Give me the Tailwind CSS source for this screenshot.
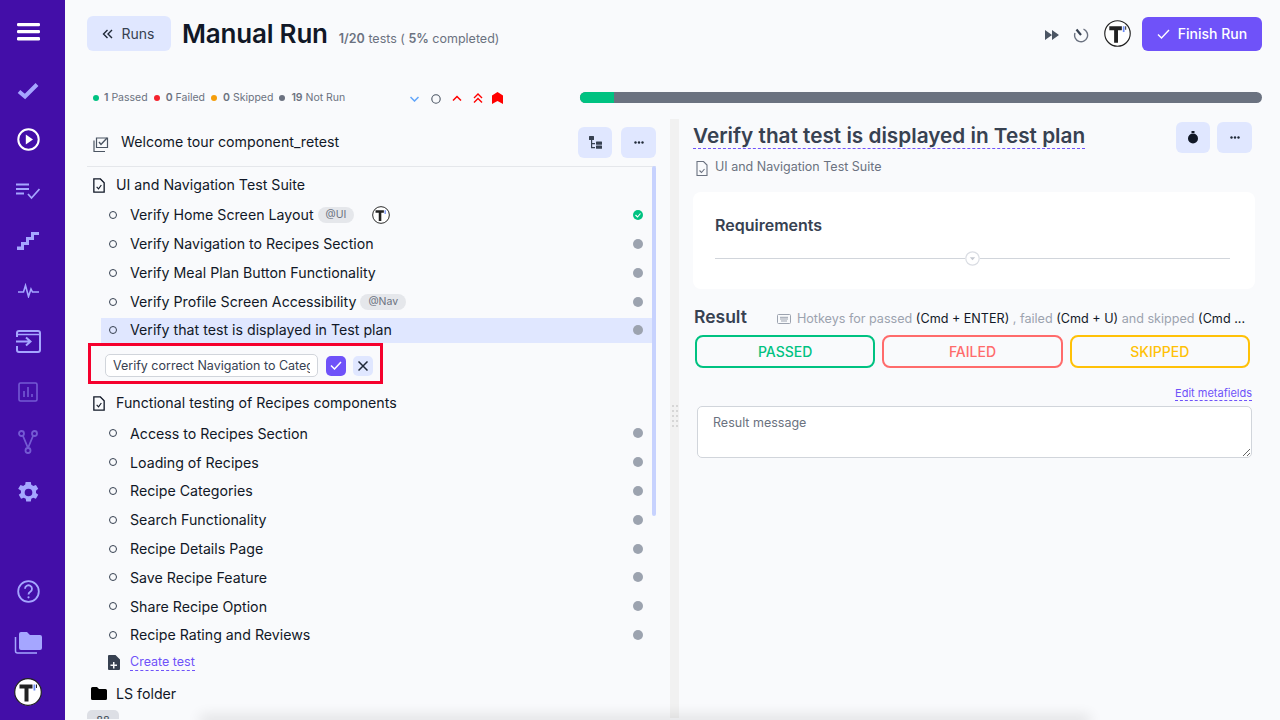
<!DOCTYPE html>
<html lang="en">
<head>
<meta charset="UTF-8">
<title>Manual Run</title>
<script src="https://cdn.jsdelivr.net/npm/@tailwindcss/browser@4"></script>
</head>
<body class="w-[1280px] h-[720px] overflow-hidden flex bg-[#f9fafc] font-['Inter',sans-serif] text-[#111827]">

<!-- Sidebar -->
<nav class="w-[65px] h-[720px] shrink-0 pr-[9px] bg-[#430ea8] flex flex-col items-center text-[#a5a6ff]">
  <svg class="mt-[23px] w-[23px] h-[18px] text-white" viewBox="0 0 23 18" fill="currentColor"><rect x="0" y="0" width="23" height="3.2" rx="1.2"/><rect x="0" y="7" width="23" height="3.2" rx="1.2"/><rect x="0" y="14" width="23" height="3.4" rx="1.2"/></svg>
  <svg class="mt-[41px] w-[22px] h-[18px]" viewBox="0 0 22 18" fill="none" stroke="currentColor" stroke-width="4"><path d="M2 9.5l6 5L20 2.5"/></svg>
  <svg class="mt-[28px] w-[23px] h-[23px] text-white" viewBox="0 0 23 23" fill="none" stroke="currentColor" stroke-width="2"><circle cx="11.5" cy="11.5" r="10.2"/><path d="M8.8 6.5l7.2 5-7.2 5z" fill="currentColor" stroke="none"/></svg>
  <svg class="mt-[32px] w-[24px] h-[17px]" viewBox="0 0 24 17" fill="none" stroke="currentColor" stroke-width="1.8"><path d="M0 1.5h13M0 6h13M0 10.5h8M12 11l3.5 4L23.5 6"/></svg>
  <svg class="mt-[32px] w-[22px] h-[18px]" viewBox="0 0 22 18" fill="currentColor"><path d="M14 0h8v3h-5v5h-5v5H7v5H0v-3.5h4V10h5V5h5z"/></svg>
  <svg class="mt-[33px] w-[21px] h-[15px]" viewBox="0 0 21 15" fill="none" stroke="currentColor" stroke-width="1.6"><path d="M0 9h5.5l2-6.5 3 11 2.500-7.500 1.500 3H21"/></svg>
  <svg class="mt-[32px] w-[25px] h-[23px]" viewBox="0 0 25 23" fill="none" stroke="currentColor" stroke-width="2"><path d="M1 7V3q0-2 2-2h19q2 0 2 2v17q0 2-2 2H3q-2 0-2-2v-4"/><path d="M1 4.500h23" stroke-width="1.500"/><path d="M0 11.500h14M10 7.500l4.500 4-4.500 4"/></svg>
  <svg class="mt-[29px] w-[20px] h-[20px] opacity-50" viewBox="0 0 20 20" fill="none" stroke="currentColor" stroke-width="1.600"><rect x="1" y="1" width="18" height="18" rx="1.500"/><path d="M6 15V9M10 15V5M14 15v-3"/></svg>
  <svg class="mt-[28px] w-[20px] h-[24px] opacity-50" viewBox="0 0 20 24" fill="none" stroke="currentColor" stroke-width="1.800"><circle cx="3.500" cy="3.500" r="2.500"/><circle cx="16.500" cy="3.500" r="2.500"/><circle cx="10" cy="20.500" r="2.500"/><path d="M5 6l5 12M15 6l-5 12"/></svg>
  <svg class="mt-[27px] w-[23px] h-[23px]" viewBox="0 0 24 24" fill="currentColor"><path fill-rule="evenodd" d="M14.400 1l.5 3a8.500 8.500 0 0 1 2 1.150l2.850-1.100 2.400 4.150-2.350 1.900a8.500 8.500 0 0 1 0 2.300l2.350 1.900-2.400 4.150-2.850-1.100a8.500 8.500 0 0 1-2 1.150l-.5 3h-4.800l-.5-3a8.500 8.500 0 0 1-2-1.150l-2.850 1.100-2.400-4.150 2.350-1.900a8.500 8.500 0 0 1 0-2.300L1.250 8.200l2.400-4.150 2.850 1.100a8.500 8.500 0 0 1 2-1.150l.5-3zM12 8a4 4 0 1 0 0 8 4 4 0 0 0 0-8z"/></svg>
  <svg class="mt-[76px] w-[23px] h-[23px]" viewBox="0 0 23 23" fill="none" stroke="currentColor" stroke-width="1.800"><circle cx="11.500" cy="11.500" r="10.300"/><path d="M8 8.800a3.500 3.500 0 1 1 5.300 3c-1.300.8-1.800 1.400-1.800 2.700"/><circle cx="11.500" cy="17.300" r="1.100" fill="currentColor" stroke="none"/></svg>
  <svg class="mt-[28px] w-[28px] h-[24px]" viewBox="0 0 28 24" fill="currentColor"><path d="M5 3q0-2 2-2h6l3 3h10q2 0 2 2v11q0 2-2 2H7q-2 0-2-2z"/><path d="M1.500 6v14q0 2 2 2H23" fill="none" stroke="currentColor" stroke-width="1.500"/></svg>
  <svg class="mt-[23px] w-[28px] h-[28px]" viewBox="0 0 28 28"><circle cx="14" cy="14" r="13.300" fill="#fff" stroke="#222" stroke-width="1.200"/><path d="M5.500 6.500h13v4h-4v13h-4v-13h-5z" fill="#222"/><path d="M19.500 6.500h1.800v6h-1.800z" fill="#6d8cf5"/><path d="M22 6.500h1v3.500h-1z" fill="#222"/></svg>
</nav>

<main class="relative flex-1 min-w-0 h-[720px] pl-[22px] pr-[18px] overflow-hidden">
  <!-- Top bar -->
  <header class="h-[35px] mt-[16px] flex items-center">
    <button class="w-[84px] h-[35px] pr-[2px] rounded-[6px] bg-[#e0e7ff] flex items-center justify-center gap-[9px] text-[14px] text-[#374151]">
      <svg class="w-[11px] h-[10px]" viewBox="0 0 11 10" fill="none" stroke="#1f2937" stroke-width="1.400"><path d="M5.500 1L1.500 5l4 4M10 1L6 5l4 4"/></svg>
      Runs
    </button>
    <h1 class="ml-[11px] text-[26px] font-semibold leading-[35px] text-[#111827] tracking-[-0.2px]">Manual Run</h1>
    <p class="ml-[11px] mt-[12px] text-[12.500px] text-[#6b7280]"><b class="font-semibold">1/20</b> tests ( <b class="font-semibold">5%</b> completed)</p>
    <div class="ml-auto flex items-center">
      <svg class="mt-[2px] w-[14px] h-[10px]" viewBox="0 0 14 10" fill="#4b5563"><path d="M0 0l7 5-7 5zM7 0l7 5-7 5z"/></svg>
      <svg class="ml-[14px] mt-[2px] w-[16px] h-[16px]" viewBox="0 0 16 16" fill="none" stroke="#6b7280" stroke-width="1.400"><path d="M10.500 2.200A6.500 6.500 0 1 1 2 6"/><path d="M3.500 2.500L8 8" stroke="#374151" stroke-width="2.200"/></svg>
      <svg class="ml-[15px] w-[27px] h-[27px]" viewBox="0 0 28 28"><circle cx="14" cy="14" r="13.200" fill="#fff" stroke="#222" stroke-width="1.200"/><path d="M5.500 6.500h13v4h-4v13h-4v-13h-5z" fill="#222"/><path d="M19.500 6.500h1.800v6h-1.800z" fill="#6d8cf5"/><path d="M22 6.500h1v3.500h-1z" fill="#222"/></svg>
      <button class="ml-[11px] w-[120px] h-[34px] rounded-[6px] bg-[#6f52f9] text-white text-[14px] font-medium flex items-center justify-center gap-[8px]">
        <svg class="w-[13px] h-[10px]" viewBox="0 0 13 10" fill="none" stroke="#fff" stroke-width="1.400"><path d="M1 5.500l3.500 3.500L12 1"/></svg>
        Finish Run
      </button>
    </div>
  </header>

  <!-- Stats row -->
  <div class="mt-[41px] h-[11px] flex items-center text-[10.500px] text-[#6b7280]">
    <span class="ml-[6px] w-[6px] h-[6px] rounded-full bg-[#00c281]"></span>
    <span class="ml-[5px]"><b class="font-semibold">1</b> Passed</span>
    <span class="ml-[6px] w-[6px] h-[6px] rounded-full bg-[#f5222d]"></span>
    <span class="ml-[6px]"><b class="font-semibold">0</b> Failed</span>
    <span class="ml-[6px] w-[6px] h-[6px] rounded-full bg-[#f59e0b]"></span>
    <span class="ml-[6px]"><b class="font-semibold">0</b> Skipped</span>
    <span class="ml-[6px] w-[6px] h-[6px] rounded-full bg-[#6b7280]"></span>
    <span class="ml-[6px]"><b class="font-semibold">19</b> Not Run</span>
    <svg class="ml-[65px] mt-[2px] w-[9px] h-[6px]" viewBox="0 0 9 6" fill="none" stroke="#60a5fa" stroke-width="1.500"><path d="M.5 1l4 4 4-4"/></svg>
    <svg class="ml-[12px] mt-[2px] w-[10px] h-[10px]" viewBox="0 0 10 10" fill="none" stroke="#4b5563" stroke-width="1.100"><circle cx="5" cy="5" r="4.200"/></svg>
    <svg class="ml-[11px] mt-[1px] w-[10px] h-[6px]" viewBox="0 0 10 6" fill="none" stroke="#f00" stroke-width="1.500"><path d="M1 5.500l4-4 4 4"/></svg>
    <svg class="ml-[11px] mt-[1px] w-[10px] h-[10px]" viewBox="0 0 10 10" fill="none" stroke="#f00" stroke-width="1.400"><path d="M1 5l4-4 4 4M1 9.500l4-4 4 4"/></svg>
    <svg class="ml-[9px] mt-[1px] w-[11px] h-[12px]" viewBox="0 0 11 12" fill="#f00"><path d="M0 3.500L5.500 0 11 3.500V12L5.500 9 0 12z"/></svg>
    <div class="ml-auto w-[682px] h-[11px] rounded-full bg-[#6b7280] overflow-hidden"><div class="w-[34px] h-full bg-[#00c281]"></div></div>
  </div>

  <!-- Panes -->
  <div class="mt-[16px] flex h-[600px]">
    <!-- Left pane -->
    <section class="relative w-[569px] shrink-0 overflow-hidden">
      <div class="pt-[8px] h-[48px] flex items-start border-b border-[#e5e7eb] w-[569px]">
        <svg class="ml-[6px] mt-[9px] w-[16px] h-[16px]" viewBox="0 0 16 16" fill="none" stroke="#4b5563" stroke-width="1.200"><path d="M3.500 11.500V2h11v9.500z"/><path d="M1 4.500v11h11" /><path d="M6 6l2 2.500L14 2" stroke-width="1.400"/></svg>
        <span class="ml-[12px] mt-[6px] text-[14.200px] leading-[18px] text-[#111827]">Welcome tour component_retest</span>
        <button class="ml-auto w-[34px] h-[31px] rounded-[6px] bg-[#e0e7ff] flex items-center justify-center">
          <svg class="w-[13px] h-[13px]" viewBox="0 0 13 13" fill="#374151"><rect x="0" y="0" width="5" height="4" rx=".5"/><path d="M2 4h1.200v7H6v1.200H2zM3 7h3v1.200H3z"/><rect x="7" y="5.500" width="6" height="3.200" rx=".5"/><rect x="7" y="9.500" width="6" height="3.200" rx=".5"/></svg>
        </button>
        <button class="ml-[9px] w-[35px] h-[31px] rounded-[6px] bg-[#e0e7ff] flex items-center justify-center">
          <svg class="w-[10px] h-[3px]" viewBox="0 0 10 3" fill="#1f2937"><circle cx="1.500" cy="1.500" r="1.200"/><circle cx="5" cy="1.500" r="1.200"/><circle cx="8.500" cy="1.500" r="1.200"/></svg>
        </button>
      </div>

      <div class="w-[566px] text-[14.200px] text-[#111827]">
        <div class="h-[33px] flex items-center pl-[5px] pt-[3px]">
          <svg class="w-[14px] h-[15px]" viewBox="0 0 14 16" fill="none" stroke="#111827" stroke-width="1.400"><path d="M1.500 1h7l4 4v10h-11z"/><path d="M4.500 9.500l2 2 3-4" stroke-width="1.200"/></svg>
          <span class="ml-[10px]">UI and Navigation Test Suite</span>
        </div>
        <div class="h-[29px] flex items-center pl-[22px] pr-[10px]">
          <span class="w-[8px] h-[8px] rounded-full border border-[#374151]"></span>
          <span class="ml-[13px]">Verify Home Screen Layout</span>
          <span class="ml-[4px] h-[16px] px-[8px] rounded-full bg-[#e5e7eb] text-[10.500px] leading-[16px] text-[#6b7280]">@UI</span>
          <svg class="ml-[18px] w-[18px] h-[18px]" viewBox="0 0 28 28"><circle cx="14" cy="14" r="13" fill="#fff" stroke="#222" stroke-width="1.500"/><path d="M5.500 6.500h13v4h-4v13h-4v-13h-5z" fill="#222"/><path d="M19.500 6.500h2v6h-2z" fill="#6d8cf5"/></svg>
          <svg class="ml-auto w-[10px] h-[10px]" viewBox="0 0 10 10"><circle cx="5" cy="5" r="5" fill="#00c281"/><path d="M2.500 5l2 2 3-3.500" fill="none" stroke="#fff" stroke-width="1.100"/></svg>
        </div>
        <div class="h-[29px] flex items-center pl-[22px] pr-[10px]">
          <span class="w-[8px] h-[8px] rounded-full border border-[#374151]"></span>
          <span class="ml-[13px]">Verify Navigation to Recipes Section</span>
          <span class="ml-auto w-[10px] h-[10px] rounded-full bg-[#9ca3af]"></span>
        </div>
        <div class="h-[29px] flex items-center pl-[22px] pr-[10px]">
          <span class="w-[8px] h-[8px] rounded-full border border-[#374151]"></span>
          <span class="ml-[13px]">Verify Meal Plan Button Functionality</span>
          <span class="ml-auto w-[10px] h-[10px] rounded-full bg-[#9ca3af]"></span>
        </div>
        <div class="h-[29px] flex items-center pl-[22px] pr-[10px]">
          <span class="w-[8px] h-[8px] rounded-full border border-[#374151]"></span>
          <span class="ml-[13px]">Verify Profile Screen Accessibility</span>
          <span class="ml-[4px] h-[16px] px-[8px] rounded-full bg-[#e5e7eb] text-[10.500px] leading-[16px] text-[#6b7280]">@Nav</span>
          <span class="ml-auto w-[10px] h-[10px] rounded-full bg-[#9ca3af]"></span>
        </div>
        <div class="ml-[14px] h-[25px] mt-[2px] pb-[1px] flex items-center pl-[8px] pr-[10px] w-[552px] bg-[#e0e7ff]">
          <span class="w-[8px] h-[8px] rounded-full border border-[#374151]"></span>
          <span class="ml-[13px]">Verify that test is displayed in Test plan</span>
          <span class="ml-auto w-[10px] h-[10px] rounded-full bg-[#9ca3af]"></span>
        </div>
        <div class="ml-[1px] w-[295px] h-[41px] border-[3px] border-[#f5002d] flex items-center pl-[14px] pt-[4px]">
          <input class="w-[213px] h-[23px] rounded-[5px] border border-[#d1d5db] bg-white px-[7px] text-[12.500px] text-[#374151]" value="Verify correct Navigation to Category">
          <button class="ml-[8px] w-[20px] h-[20px] rounded-[5px] bg-[#6f52f9] flex items-center justify-center">
            <svg class="w-[12px] h-[9px]" viewBox="0 0 12 9" fill="none" stroke="#fff" stroke-width="1.500"><path d="M1 4.500L4.500 8 11 1"/></svg>
          </button>
          <button class="ml-[7px] w-[20px] h-[20px] rounded-[5px] bg-[#e0e7ff] flex items-center justify-center">
            <svg class="w-[10px] h-[10px]" viewBox="0 0 10 10" fill="none" stroke="#1f2937" stroke-width="1.500"><path d="M.5.500l9 9M9.500.500l-9 9"/></svg>
          </button>
        </div>
        <div class="h-[35px] flex items-center pl-[5px] pt-[3px]">
          <svg class="w-[14px] h-[15px]" viewBox="0 0 14 16" fill="none" stroke="#111827" stroke-width="1.400"><path d="M1.500 1h7l4 4v10h-11z"/><path d="M4.500 9.500l2 2 3-4" stroke-width="1.200"/></svg>
          <span class="ml-[10px]">Functional testing of Recipes components</span>
        </div>
        <div class="h-[28.800px] flex items-center pl-[22px] pr-[10px]"><span class="w-[8px] h-[8px] rounded-full border border-[#374151]"></span><span class="ml-[13px]">Access to Recipes Section</span><span class="ml-auto w-[10px] h-[10px] rounded-full bg-[#9ca3af]"></span></div>
        <div class="h-[28.800px] flex items-center pl-[22px] pr-[10px]"><span class="w-[8px] h-[8px] rounded-full border border-[#374151]"></span><span class="ml-[13px]">Loading of Recipes</span><span class="ml-auto w-[10px] h-[10px] rounded-full bg-[#9ca3af]"></span></div>
        <div class="h-[28.800px] flex items-center pl-[22px] pr-[10px]"><span class="w-[8px] h-[8px] rounded-full border border-[#374151]"></span><span class="ml-[13px]">Recipe Categories</span><span class="ml-auto w-[10px] h-[10px] rounded-full bg-[#9ca3af]"></span></div>
        <div class="h-[28.800px] flex items-center pl-[22px] pr-[10px]"><span class="w-[8px] h-[8px] rounded-full border border-[#374151]"></span><span class="ml-[13px]">Search Functionality</span><span class="ml-auto w-[10px] h-[10px] rounded-full bg-[#9ca3af]"></span></div>
        <div class="h-[28.800px] flex items-center pl-[22px] pr-[10px]"><span class="w-[8px] h-[8px] rounded-full border border-[#374151]"></span><span class="ml-[13px]">Recipe Details Page</span><span class="ml-auto w-[10px] h-[10px] rounded-full bg-[#9ca3af]"></span></div>
        <div class="h-[28.800px] flex items-center pl-[22px] pr-[10px]"><span class="w-[8px] h-[8px] rounded-full border border-[#374151]"></span><span class="ml-[13px]">Save Recipe Feature</span><span class="ml-auto w-[10px] h-[10px] rounded-full bg-[#9ca3af]"></span></div>
        <div class="h-[28.800px] flex items-center pl-[22px] pr-[10px]"><span class="w-[8px] h-[8px] rounded-full border border-[#374151]"></span><span class="ml-[13px]">Share Recipe Option</span><span class="ml-auto w-[10px] h-[10px] rounded-full bg-[#9ca3af]"></span></div>
        <div class="h-[28.800px] flex items-center pl-[22px] pr-[10px]"><span class="w-[8px] h-[8px] rounded-full border border-[#374151]"></span><span class="ml-[13px]">Recipe Rating and Reviews</span><span class="ml-auto w-[10px] h-[10px] rounded-full bg-[#9ca3af]"></span></div>
        <div class="h-[27px] flex items-center pl-[21px]">
          <svg class="w-[12px] h-[15px]" viewBox="0 0 12 15" fill="#374151"><path fill-rule="evenodd" d="M1 0h6.500L12 4.500V14q0 1-1 1H1q-1 0-1-1V1q0-1 1-1zm4 7v2.500H2.500v1.500H5v2.500h1.500V11H9V9.500H6.500V7z"/></svg>
          <a class="ml-[10px] text-[12.500px] leading-[16px] text-[#6f52f9] border-b border-dashed border-[#6f52f9]">Create test</a>
        </div>
        <div class="h-[35px] flex items-center pl-[4px]">
          <svg class="w-[16px] h-[13px]" viewBox="0 0 16 13" fill="#000"><path d="M0 1.500q0-1.500 1.500-1.500H6l2 2h6.500Q16 2 16 3.500v8q0 1.500-1.500 1.500h-13Q0 13 0 11.500z"/></svg>
          <span class="ml-[9px]">LS folder</span>
        </div>
        <div class="w-[32px] h-[20px] mt-[-1px] rounded-[5px] bg-[#dddfe5] text-center text-[11px] leading-[20px] text-[#4b5563]">88</div>
      </div>

      <!-- list scrollbar -->
      <div class="absolute left-[565px] top-[47px] w-[4px] h-[350px] rounded-full bg-[#c7d2fe]"></div>
    </section>

    <!-- Resize gutter -->
    <div class="ml-[14px] w-[9px] h-[599px] shrink-0 bg-[#f1f1f1] flex items-center justify-center">
      <svg class="w-[6px] h-[26px] mt-[-3px]" viewBox="0 0 6 26" fill="#b5b5b5"><circle cx="1" cy="2" r=".8"/><circle cx="5" cy="2" r=".8"/><circle cx="1" cy="7" r=".8"/><circle cx="5" cy="7" r=".8"/><circle cx="1" cy="12" r=".8"/><circle cx="5" cy="12" r=".8"/><circle cx="1" cy="17" r=".8"/><circle cx="5" cy="17" r=".8"/><circle cx="1" cy="22" r=".8"/><circle cx="5" cy="22" r=".8"/></svg>
    </div>

    <!-- Right pane -->
    <section class="ml-[14px] w-[569px] shrink-0">
      <div class="flex items-start pt-[3px]">
        <h2 class="mt-[1px] text-[20.750px] font-semibold leading-[26px] h-[26px] text-[#374151] border-b border-dashed border-[#6f52f9]">Verify that test is displayed in Test plan</h2>
        <button class="ml-auto w-[34px] h-[31px] rounded-[6px] bg-[#e0e7ff] flex items-center justify-center">
          <svg class="w-[10px] h-[13px]" viewBox="0 0 10 13" fill="#111827"><circle cx="5" cy="7.500" r="5"/><rect x="3.500" y="0" width="3" height="2"/></svg>
        </button>
        <button class="ml-[7px] mr-[10px] w-[35px] h-[31px] rounded-[6px] bg-[#e0e7ff] flex items-center justify-center">
          <svg class="w-[10px] h-[3px]" viewBox="0 0 10 3" fill="#1f2937"><circle cx="1.500" cy="1.500" r="1.200"/><circle cx="5" cy="1.500" r="1.200"/><circle cx="8.500" cy="1.500" r="1.200"/></svg>
        </button>
      </div>
      <div class="mt-[5px] flex items-center text-[12.500px] text-[#6b7280] leading-[18px]">
        <svg class="ml-[3px] w-[12px] h-[15px] mt-[2px]" viewBox="0 0 12 15" fill="none" stroke="#6b7280" stroke-width="1.100"><path d="M1 .5h6.500L11 4v10.500H1z"/><path d="M3.500 9.500l2 2 3-3.500"/></svg>
        <span class="ml-[7px]">UI and Navigation Test Suite</span>
      </div>
      <div class="mt-[16px] w-[562px] h-[97px] rounded-[8px] bg-white pt-[23px] pl-[22px] pr-[25px]">
        <h3 class="text-[16px] font-semibold leading-[20px] text-[#374151]">Requirements</h3>
        <div class="mt-[16px] flex items-center">
          <div class="flex-1 h-px bg-[#d1d5db]"></div>
          <svg class="w-[15px] h-[15px]" viewBox="0 0 15 15"><circle cx="7.500" cy="7.500" r="6.700" fill="#fff" stroke="#dadde3" stroke-width="1.200"/><path d="M4.800 6.200h5.400l-2.700 3z" fill="#c4c8d0"/></svg>
          <div class="flex-1 h-px bg-[#d1d5db]"></div>
        </div>
      </div>
      <div class="mt-[16px] flex items-center h-[24px]">
        <span class="ml-[1px] text-[17.500px] font-semibold text-[#374151] leading-[24px]">Result</span>
        <svg class="ml-[30px] mt-[4px] w-[14px] h-[10px]" viewBox="0 0 14 10" fill="none" stroke="#9ca3af"><rect x=".5" y=".5" width="13" height="9" rx="1"/><path d="M3 3.300h8M3 5h8M4 7h6"/></svg>
        <span class="ml-[6px] mt-[4px] text-[12.600px] text-[#9ca3af] whitespace-nowrap">Hotkeys for passed <span class="text-[#111827]">(Cmd + ENTER)</span> , failed <span class="text-[#111827]">(Cmd + U)</span> and skipped <span class="text-[#111827]">(Cmd ...</span></span>
      </div>
      <div class="mt-[6px] flex gap-[7px] ml-[2px] w-[555px] text-[14px] font-medium text-center">
        <div class="flex-1 h-[33px] rounded-[8px] border-2 border-[#00c281] text-[#00c281] leading-[29px]">PASSED</div>
        <div class="flex-1 h-[33px] rounded-[8px] border-2 border-[#ff6b6b] text-[#ff6b6b] leading-[29px]">FAILED</div>
        <div class="flex-1 h-[33px] rounded-[8px] border-2 border-[#ffc107] text-[#ffc107] leading-[29px]">SKIPPED</div>
      </div>
      <div class="mt-[18px] w-[559px] flex justify-end">
        <a class="text-[11px] leading-[14px] text-[#6f52f9] border-b border-dashed border-[#6f52f9]">Edit metafields</a>
      </div>
      <textarea class="block mt-[5px] ml-[4px] w-[555px] h-[52px] rounded-[5px] border border-[#d1d5db] bg-white px-[15px] py-[7px] text-[12.500px] placeholder:text-[#6b7280]" placeholder="Result message"></textarea>
    </section>
  </div>

  <!-- faint shadow along the bottom edge -->
  <div class="absolute left-[135px] bottom-[-10px] w-[890px] h-[10px] shadow-[0_-4px_14px_rgba(0,0,0,0.12)]"></div>
</main>
</body>
</html>
